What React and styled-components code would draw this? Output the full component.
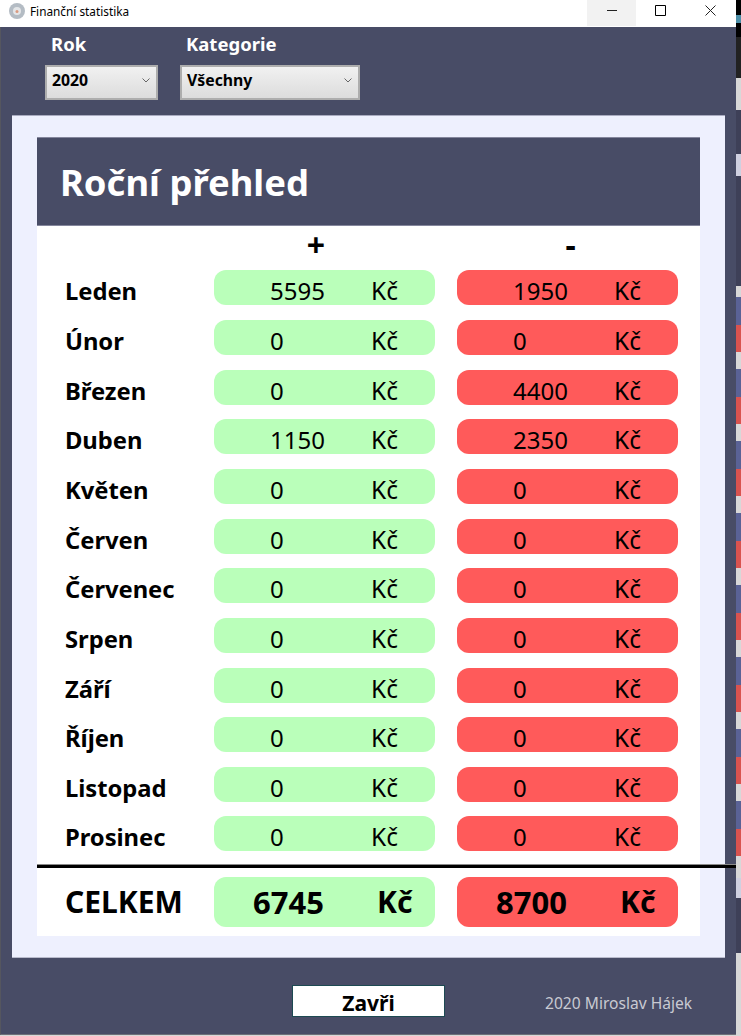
import React from 'react'
import styled, { createGlobalStyle } from 'styled-components'

const GlobalStyle = createGlobalStyle`
  html, body {
    margin: 0;
    padding: 0;
    background: #d8d8d8;
    overflow: hidden;
  }
  * {
    box-sizing: border-box;
  }
`

const Desktop = styled.div`
  display: flex;
  width: 741px;
  height: 1036px;
  font-family: 'Noto Sans', 'Open Sans', sans-serif;
  color: #000;
`
const Window = styled.div`
  width: 736px;
  height: 1035px;
  display: flex;
  flex-direction: column;
  background: #484c66;
  border-left: 1px solid #55565f;
  border-bottom: 1px solid #6e6f78;
`
const TitleBar = styled.div`
  height: 27px;
  flex: none;
  margin-left: -1px;
  display: flex;
  align-items: flex-start;
  background: #fff;
`
const AppIcon = styled.svg`
  width: 16px;
  height: 16px;
  margin: 3px 0 0 9px;
`
const WindowTitle = styled.div`
  margin: 2px 0 0 5px;
  font-size: 11.8px;
  line-height: 18px;
  flex: 1;
`
const WinButton = styled.div`
  width: ${(p) => p.$w}px;
  height: 26px;
  display: flex;
  align-items: flex-start;
  justify-content: center;
  padding-top: 5px;
  background: ${(p) => (p.$hover ? '#f2f2f2' : '#fff')};
`
const Filters = styled.div`
  height: 88px;
  flex: none;
  padding: 6px 0 0 44px;
  display: flex;
  gap: 22px;
`
const Filter = styled.div`
  display: flex;
  flex-direction: column;
`
const FilterLabel = styled.div`
  height: 32px;
  padding-left: 6px;
  font-size: 18.5px;
  line-height: 21px;
  font-weight: 700;
  color: #fff;
`
const Select = styled.div`
  width: ${(p) => p.$w}px;
  height: 35px;
  padding: 0 6px 5px 5px;
  display: flex;
  align-items: center;
  justify-content: space-between;
  font-size: 15.8px;
  font-weight: 700;
  background: linear-gradient(#f1f1f1, #dcdcdc);
  border: 2px solid #adadad;
`
const Panel = styled.div`
  width: 713px;
  height: 843px;
  flex: none;
  margin-left: 11px;
  padding: 21px 25px;
  background: #eef0fe;
  border-top: 1px solid #a9abc0;
  border-bottom: 1px solid #b9bbcc;
`
const Sheet = styled.div`
  height: 799px;
  background: #fff;
`
const Header = styled.div`
  height: 89px;
  padding: 0 0 0 23px;
  display: flex;
  align-items: center;
  background: #484c66;
  border-top: 1px solid #84869c;
  border-bottom: 1px solid #84869c;
`
const Title = styled.h1`
  margin: 0;
  font-size: 36.4px;
  font-weight: 700;
  color: #fff;
`
const Table = styled.div`
  display: grid;
  grid-template-columns: 155px 221px 221px;
  column-gap: 22px;
`
const SignCell = styled.div`
  height: 44.4px;
  font-size: 32px;
  line-height: 38px;
  font-weight: 700;
  text-align: center;
  padding-left: ${(p) => p.$left || 0}px;
  padding-right: ${(p) => p.$right || 0}px;
`
const Rows = styled(Table)`
  grid-auto-rows: 35px;
  row-gap: 14.65px;
`
const MonthName = styled.div`
  padding-left: 28px;
  font-size: 23.8px;
  line-height: 42px;
  font-weight: 700;
  letter-spacing: -0.05px;
`
const Pill = styled.div`
  display: flex;
  align-items: center;
  padding-top: ${(p) => p.$drop}px;
  border-radius: 12px;
  background: ${(p) => (p.$kind === 'plus' ? '#baffba' : '#ff5a5a')};
`
const Amount = styled.span`
  width: 101px;
  margin-left: 56px;
  font-size: 24px;
`
const Currency = styled.span`
  font-size: 24.5px;
`
const Divider = styled.div`
  height: 3px;
  margin: 13.45px -36px 9px 0;
  background: #000;
  box-shadow: 0 -1px 0 #8a8a8a;
`
const TotalRow = styled(Table)`
  grid-auto-rows: 50px;
`
const TotalName = styled.div`
  padding-left: 28px;
  font-size: 30px;
  line-height: 50px;
  font-weight: 700;
`
const TotalAmount = styled.span`
  width: 124px;
  margin-left: 39px;
  font-size: 31px;
  font-weight: 700;
`
const TotalCurrency = styled.span`
  font-size: 30px;
  font-weight: 700;
`
const Footer = styled.div`
  display: flex;
  align-items: flex-start;
  padding: 27px 0 0 291px;
`
const CloseButton = styled.button`
  width: 153px;
  height: 32px;
  padding: 3px 0 0;
  font-family: inherit;
  font-size: 21px;
  font-weight: 700;
  line-height: 26px;
  color: #000;
  background: #fff;
  border: 1px solid #1d4a52;
`
const Credit = styled.div`
  margin: 6px 0 0 100px;
  font-size: 15.6px;
  line-height: 24px;
  color: #c8cad2;
`
const Strip = styled.div`
  width: 5px;
  height: 1036px;
  flex: none;
  display: flex;
  flex-direction: column;
`
const StripPiece = styled.div`
  height: ${(p) => p.$h}px;
  flex: none;
  background: ${(p) => p.$c};
`

const months = [
  ['Leden', 5595, 1950],
  ['Únor', 0, 0],
  ['Březen', 0, 4400],
  ['Duben', 1150, 2350],
  ['Květen', 0, 0],
  ['Červen', 0, 0],
  ['Červenec', 0, 0],
  ['Srpen', 0, 0],
  ['Září', 0, 0],
  ['Říjen', 0, 0],
  ['Listopad', 0, 0],
  ['Prosinec', 0, 0],
]

// what shows of the window behind, on the right edge
const stripPieces = [
  [15, '#000'],
  [8, '#4c8fa8'],
  [14, '#000'],
  [41, '#222'],
  [32, '#d8d8d8'],
  [44, '#3e4058'],
  [22, '#cfd0e0'],
  [110, '#3e4058'],
  [11, '#d8d8d8'],
]
for (let i = 0; i < 8; i++) {
  stripPieces.push([28, '#5a6296'], [27, '#d9534f'], [i === 7 ? 0 : 17, '#d8d8d8'])
}
stripPieces.push([22, '#d8d8d8'], [20, '#cfd0e0'], [55, '#3e4058'], [84, '#d8d8d8'])

function MoneyPill({ kind, value }) {
  return (
    <Pill $kind={kind} $drop={6}>
      <Amount>{value}</Amount>
      <Currency>Kč</Currency>
    </Pill>
  )
}

function TotalPill({ kind, value }) {
  return (
    <Pill $kind={kind} $drop={0}>
      <TotalAmount>{value}</TotalAmount>
      <TotalCurrency>Kč</TotalCurrency>
    </Pill>
  )
}

function Chevron() {
  return (
    <svg width="8" height="5" viewBox="0 0 8 5" fill="none" stroke="#666" strokeWidth="1">
      <path d="M.5.5 4 4 7.5.5" />
    </svg>
  )
}

export default function App() {
  return (
    <Desktop>
      <GlobalStyle />
      <Window>
        <TitleBar>
          <AppIcon viewBox="0 0 16 16">
            <circle cx="8" cy="8" r="8" fill="#b4bcc4" />
            <circle cx="8" cy="8" r="4" fill="#e4e6e8" />
            <circle cx="8" cy="8.5" r="1.5" fill="#d99a80" />
          </AppIcon>
          <WindowTitle>Finanční statistika</WindowTitle>
          <WinButton $w={49} $hover>
            <svg width="12" height="12" viewBox="0 0 12 12" stroke="#222">
              <path d="M1 5.5h10" />
            </svg>
          </WinButton>
          <WinButton $w={50}>
            <svg width="12" height="12" viewBox="0 0 12 12" fill="none" stroke="#000">
              <path d="M.5.5h10v10H.5z" />
            </svg>
          </WinButton>
          <WinButton $w={50}>
            <svg width="12" height="12" viewBox="0 0 12 12" stroke="#222">
              <path d="M.5.5l10 10M10.5.5l-10 10" />
            </svg>
          </WinButton>
        </TitleBar>

        <Filters>
          <Filter>
            <FilterLabel>Rok</FilterLabel>
            <Select $w={113}>
              2020
              <Chevron />
            </Select>
          </Filter>
          <Filter>
            <FilterLabel>Kategorie</FilterLabel>
            <Select $w={180}>
              Všechny
              <Chevron />
            </Select>
          </Filter>
        </Filters>

        <Panel>
          <Sheet>
            <Header>
              <Title>Roční přehled</Title>
            </Header>
            <Table>
              <div />
              <SignCell $right={17}>+</SignCell>
              <SignCell $left={6}>-</SignCell>
            </Table>
            <Rows>
              {months.map(([name, plus, minus]) => (
                <React.Fragment key={name}>
                  <MonthName>{name}</MonthName>
                  <MoneyPill kind="plus" value={plus} />
                  <MoneyPill kind="minus" value={minus} />
                </React.Fragment>
              ))}
            </Rows>
            <Divider />
            <TotalRow>
              <TotalName>CELKEM</TotalName>
              <TotalPill kind="plus" value={6745} />
              <TotalPill kind="minus" value={8700} />
            </TotalRow>
          </Sheet>
        </Panel>

        <Footer>
          <CloseButton>Zavři</CloseButton>
          <Credit>2020 Miroslav Hájek</Credit>
        </Footer>
      </Window>
      <Strip>
        {stripPieces.map(([h, c], i) => (
          <StripPiece key={i} $h={h} $c={c} />
        ))}
      </Strip>
    </Desktop>
  )
}
